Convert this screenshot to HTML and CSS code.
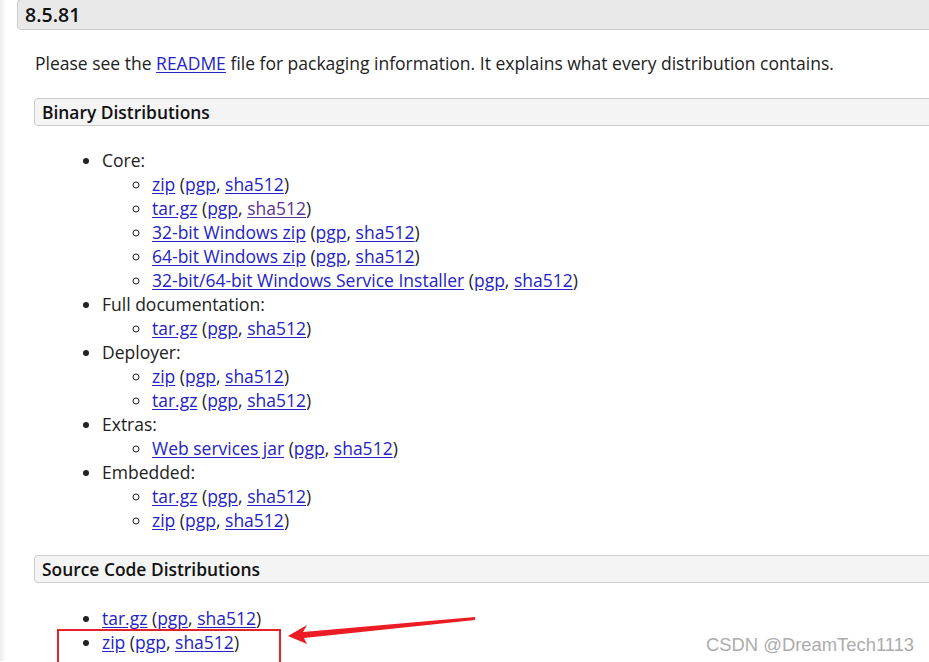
FILE: index.html
```html
<!DOCTYPE html>
<html>
<head>
<meta charset="utf-8">
<link rel="stylesheet" href="styles.css">
</head>
<body>
<div class="page">
  <h3 class="version">8.5.81</h3>
  <div class="content">
    <p class="intro">Please see the <a href="#">README</a> file for packaging information. It explains what every distribution contains.</p>
    <h4 class="section">Binary Distributions</h4>
    <ul class="list">
      <li>Core:
        <ul class="sub">
          <li><a href="#">zip</a> (<a href="#">pgp</a>, <a href="#">sha512</a>)</li>
          <li><a href="#">tar.gz</a> (<a href="#">pgp</a>, <a href="#" class="visited">sha512</a>)</li>
          <li><a href="#">32-bit Windows zip</a> (<a href="#">pgp</a>, <a href="#">sha512</a>)</li>
          <li><a href="#">64-bit Windows zip</a> (<a href="#">pgp</a>, <a href="#">sha512</a>)</li>
          <li><a href="#">32-bit/64-bit Windows Service Installer</a> (<a href="#">pgp</a>, <a href="#">sha512</a>)</li>
        </ul>
      </li>
      <li>Full documentation:
        <ul class="sub">
          <li><a href="#">tar.gz</a> (<a href="#">pgp</a>, <a href="#">sha512</a>)</li>
        </ul>
      </li>
      <li>Deployer:
        <ul class="sub">
          <li><a href="#">zip</a> (<a href="#">pgp</a>, <a href="#">sha512</a>)</li>
          <li><a href="#">tar.gz</a> (<a href="#">pgp</a>, <a href="#">sha512</a>)</li>
        </ul>
      </li>
      <li>Extras:
        <ul class="sub">
          <li><a href="#">Web services jar</a> (<a href="#">pgp</a>, <a href="#">sha512</a>)</li>
        </ul>
      </li>
      <li>Embedded:
        <ul class="sub">
          <li><a href="#">tar.gz</a> (<a href="#">pgp</a>, <a href="#">sha512</a>)</li>
          <li><a href="#">zip</a> (<a href="#">pgp</a>, <a href="#">sha512</a>)</li>
        </ul>
      </li>
    </ul>
    <h4 class="section">Source Code Distributions</h4>
    <ul class="list src">
      <li><a href="#">tar.gz</a> (<a href="#">pgp</a>, <a href="#">sha512</a>)</li>
      <li><a href="#">zip</a> (<a href="#">pgp</a>, <a href="#">sha512</a>)</li>
    </ul>
  </div>
</div>
<div class="redbox"></div>
<svg class="arrow" width="200" height="30" viewBox="0 0 200 30">
  <polygon points="3,19 22,8 18,15 190,0 190,3 19,21 22,27" fill="#ec1c24"/>
</svg>
<div class="watermark">CSDN @DreamTech1113</div>
</body>
</html>
```
FILE: styles.css
```css
html, body {
  margin: 0;
  padding: 0;
  background: #ffffff;
}
body {
  font-family: "Open Sans", "Noto Sans", sans-serif;
  color: #222;
  overflow: hidden;
  height: 662px;
  position: relative;
}
.page {
  padding-left: 17px;
  background: linear-gradient(to right, #ececec 0px, #f6f6f6 3px, #ffffff 6px);
  min-height: 662px;
}
.version {
  margin: -1px -8px 0 0;
  height: 31px;
  box-sizing: border-box;
  border: 1px solid #cccccc;
  border-radius: 4px;
  background: #e9e9e9;
  font-size: 19.5px;
  font-weight: 600;
  line-height: 29px;
  padding-left: 7px;
  color: #111;
}
.content {
  padding-left: 17px;
}
.intro {
  margin: 20px 0 0 1px;
  font-size: 17.5px;
  line-height: 26px;
  color: #222;
}
a {
  color: #2323c8;
  text-decoration: underline;
  text-underline-offset: 2px;
}
a.visited {
  color: #5c3290;
}
.section {
  margin: 22px -8px 0 0;
  height: 28px;
  box-sizing: border-box;
  border: 1px solid #cccccc;
  border-radius: 4px;
  background: #f4f4f4;
  font-size: 17.4px;
  font-weight: 600;
  line-height: 26px;
  padding-left: 7px;
  color: #111;
}
.list {
  margin: 22px 0 23px 0;
  padding-left: 68px;
  font-size: 17.5px;
  line-height: 24px;
  list-style: disc;
}
.list.src {
  margin-top: 23px;
}
.sub {
  margin: 0;
  padding-left: 50px;
  list-style: circle;
}
.redbox {
  position: absolute;
  left: 57px;
  top: 629px;
  width: 224px;
  height: 33px;
  box-sizing: border-box;
  border: 2px solid #e5222a;
  border-bottom: none;
}
.arrow {
  position: absolute;
  left: 285px;
  top: 617px;
}
.watermark {
  position: absolute;
  left: 706px;
  top: 634px;
  font-family: "Liberation Sans", Arial, sans-serif;
  font-size: 18.4px;
  color: #acacac;
  text-shadow: 0 0 1px #ffffff;
}
```
